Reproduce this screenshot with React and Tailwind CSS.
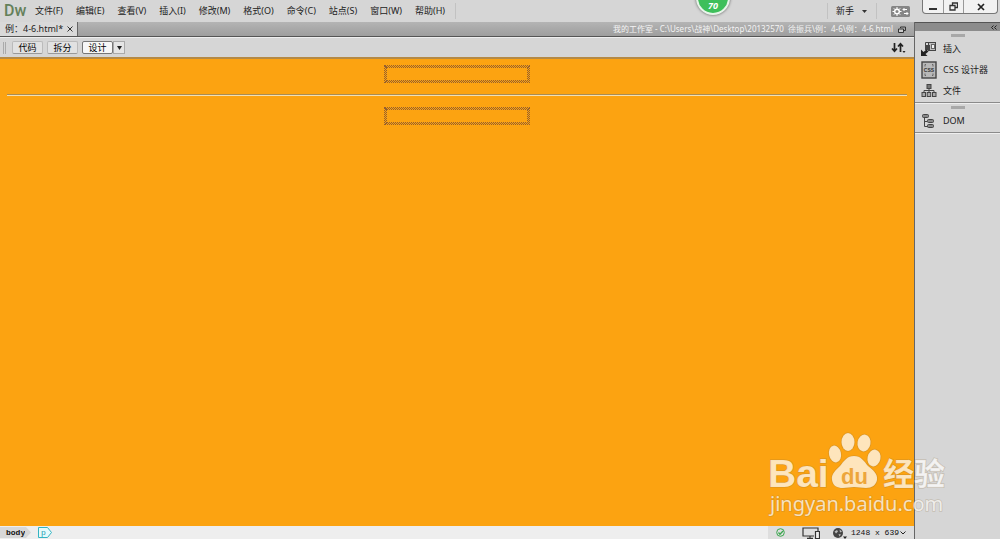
import { useState } from 'react';
import clsx from 'clsx';

const menus = ['文件(F)', '编辑(E)', '查看(V)', '插入(I)', '修改(M)', '格式(O)', '命令(C)', '站点(S)', '窗口(W)', '帮助(H)'];

const views = ['代码', '拆分', '设计'];

function InsertIcon() {
  return (
    <svg viewBox="0 0 16 16" className="w-4 h-4" fill="none" stroke="#444">
      <rect x="7.500" y="1.500" width="7" height="8" fill="#bdbdbd" />
      <rect x="10.500" y="3.500" width="3" height="4" fill="#f2f2f2" stroke="#666" />
      <rect x="4.500" y="4.500" width="4" height="4" fill="#444" />
      <path d="M4.500 4V1.500H8" />
      <path d="M0 8.500V15h6.500l-2-2 3-2.500-2-2-3 2.500z" fill="#222" stroke="none" />
    </svg>
  );
}

function CssIcon() {
  return (
    <svg viewBox="0 0 16 18" className="w-4 h-[18px]">
      <rect x="1" y="1" width="14" height="16" fill="#b8b8b8" stroke="#444" strokeWidth="1.400" />
      <path d="M5 3.500H4v2M11 3.500h1v2M5 14.500H4v-2M11 14.500h1v-2" fill="none" stroke="#666" />
      <text x="8" y="11" textAnchor="middle" fontSize="5" fontWeight="bold" fontFamily="Liberation Sans" fill="#333">CSS</text>
    </svg>
  );
}

function FilesIcon() {
  return (
    <svg viewBox="0 0 16 16" className="w-4 h-4" fill="none" stroke="#444">
      <path d="M8 5v5M3 10V7.500h10V10" />
      <rect x="6" y="1.500" width="4" height="4" fill="#777" />
      <rect x="1" y="9.500" width="3.500" height="4" fill="#aaa" />
      <rect x="6.200" y="9.500" width="3.500" height="4" fill="#aaa" />
      <rect x="11.500" y="9.500" width="3.500" height="4" fill="#aaa" />
    </svg>
  );
}

function DomIcon() {
  return (
    <svg viewBox="0 0 16 16" className="w-4 h-4" fill="none" stroke="#444">
      <path d="M3.500 4v9.500H7M3.500 8.500H6" />
      <rect x="1.500" y="1.500" width="6" height="3" rx="1" fill="#888" />
      <rect x="6.500" y="6.500" width="6" height="3" rx="1" fill="#888" />
      <rect x="6.500" y="11.500" width="6" height="3" rx="1" fill="#888" />
    </svg>
  );
}

function PanelGroup({ children }) {
  return (
    <section className="flex flex-col border-b border-[#8a8a8a] pb-px shadow-[0_1px_0_#eee]">
      <div className="mx-auto mt-[3px] mb-px w-[14px] h-[3px] bg-[#a8a8a8]" />
      {children}
    </section>
  );
}

function PanelButton({ icon, label }) {
  return (
    <button className="flex items-center gap-[6px] h-[21px] px-[6px] whitespace-nowrap text-[9px] text-[#222]">
      {icon}
      {label}
    </button>
  );
}

// Table without content, its outline is three rows of staggered dots
function EmptyTable() {
  return (
    <div className="mx-auto w-[146px] h-[18px] border border-dotted border-[#95602f]">
      <div className="h-full border border-dotted border-[#95602f]">
        <div className="h-full border border-dotted border-[#95602f]" />
      </div>
    </div>
  );
}

function Watermark() {
  return (
    <svg
      viewBox="0 0 190 92"
      className="absolute right-[48px] bottom-[17px] w-[190px] h-[92px] pointer-events-none"
      fill="#fff"
      fillOpacity="0.72"
      stroke="#8c6e40"
      strokeOpacity="0.25"
      strokeWidth="1.500"
      paintOrder="stroke"
    >
      <text x="6" y="57" fontSize="39" fontWeight="bold" fontFamily="Liberation Sans">Bai</text>
      <ellipse cx="73" cy="24" rx="6" ry="8.500" transform="rotate(-12 73 24)" />
      <ellipse cx="86" cy="12" rx="6.500" ry="9" />
      <ellipse cx="102" cy="13" rx="6.500" ry="8.500" transform="rotate(10 102 13)" />
      <ellipse cx="112" cy="28" rx="6.500" ry="8.500" transform="rotate(12 112 28)" />
      <path d="M92 26c-7 0-10 5-14 10-4 4-9 8-8 14 1 6 5 8 11 8 4 0 7-1 11-1s8 1 12 1c6 0 10-3 11-8 1-6-4-10-9-14-4-5-7-10-14-10z" />
      <text x="79" y="54" fontSize="22" fontWeight="bold" fontFamily="Liberation Sans" fill="#eda63b" fillOpacity="1" stroke="none">du</text>
      <text x="121" y="55" fontSize="31" fontWeight="bold" fontFamily="Noto Sans CJK SC">经验</text>
      <text x="8" y="81" fontSize="20" fontFamily="Noto Sans">jingyan.baidu.com</text>
    </svg>
  );
}

export default function App() {
  const [view, setView] = useState('设计');

  return (
    <div className="relative flex flex-col h-screen overflow-hidden bg-[#d6d6d6] text-[#222] font-['Noto_Sans','Noto_Sans_CJK_SC',sans-serif] text-[9px] leading-3">
      {/* Menu bar */}
      <header className="flex items-center h-[22px] shrink-0">
        <div className="w-[30px] pl-1 text-base leading-5 font-medium text-[#64805a] font-['Roboto',sans-serif]">Dw</div>
        <nav className="flex items-center gap-[13px] pl-[5px] whitespace-nowrap">
          {menus.map(m => <button key={m}>{m}</button>)}
        </nav>
        <div className="ml-[10px] w-px h-4 bg-[#c2c2c2]" />
        <div className="flex-1" />
        <div className="w-px h-4 bg-[#c2c2c2]" />
        <button className="flex items-center gap-2 pl-2 pr-[9px]">
          新手
          <svg viewBox="0 0 5 3" className="w-[5px] h-[3px] mt-px"><path d="M0 0h5L2.500 3z" fill="#333" /></svg>
        </button>
        <div className="w-px h-4 mr-[14px] bg-[#c2c2c2]" />
        <button aria-label="同步设置" className="mr-3">
          <svg viewBox="0 0 19 11" className="w-[19px] h-[11px]">
            <rect width="19" height="11" rx="1.500" fill="#858585" />
            <circle cx="6" cy="5.500" r="2.300" fill="none" stroke="#fff" strokeWidth="1.400" />
            <path d="M6 1v2M6 8v2M1.500 5.500h2M8.500 5.500h2M2.800 2.300l1.400 1.400M7.800 7.300l1.400 1.400M2.800 8.700l1.400-1.400M7.800 3.700l1.400-1.400" stroke="#fff" />
            <path d="M16 3.500h-4M13.500 2L12 3.500 13.500 5M13 7.500h4M15.500 6L17 7.500 15.500 9" fill="none" stroke="#fff" />
          </svg>
        </button>
        <div className="flex self-start h-[14px] mr-[2px] border border-t-0 border-[#777] rounded-b-sm bg-[#f2f2f2] divide-x divide-[#999]">
          <button aria-label="最小化" className="w-[21px] flex justify-center items-center">
            <svg viewBox="0 0 8 8" className="w-2 h-2"><path d="M0 5h8v2H0z" fill="#333" /></svg>
          </button>
          <button aria-label="还原" className="w-[20px] flex justify-center items-center">
            <svg viewBox="0 0 9 9" className="w-[9px] h-[9px]" fill="#f2f2f2" stroke="#333" strokeWidth="1.300">
              <path d="M3.500 1h5v4.500h-5z" /><path d="M1 3.500h5V8H1z" />
            </svg>
          </button>
          <button aria-label="关闭" className="w-[33px] flex justify-center items-center">
            <svg viewBox="0 0 8 8" className="w-2 h-2"><path d="M1 1l6 6M7 1L1 7" stroke="#222" strokeWidth="1.700" /></svg>
          </button>
        </div>
      </header>

      <div className="flex flex-1 min-h-0">
        <main className="flex flex-col flex-1 min-w-0">
          {/* Document tabs */}
          <div className="flex items-center h-[15px] shrink-0 border-b border-[#555] bg-linear-to-b from-[#b4b4b4] to-[#9e9e9e]">
            <div className="flex items-center gap-1 h-full pl-[5px] pr-1 bg-[#d9d9d9] border-r border-[#666] whitespace-nowrap">
              <span>例：4-6.html*</span>
              <button aria-label="关闭文件">
                <svg viewBox="0 0 6 6" className="w-[6px] h-[6px]"><path d="M.5.5l5 5M5.500.5l-5 5" stroke="#333" /></svg>
              </button>
            </div>
            <span className="ml-auto text-[#f4f4f4] text-[8px] whitespace-pre">我的工作室 - C:\Users\战神\Desktop\20132570  徐振兵\例：4-6\例：4-6.html</span>
            <button aria-label="还原文档" className="ml-[5px] mr-2">
              <svg viewBox="0 0 8 7" className="w-2 h-[7px]" fill="none" stroke="#333">
                <path d="M2.500 2V1h5v3.500H6" /><path d="M.5 3h5v3.500h-5z" fill="#ccc" />
              </svg>
            </button>
          </div>

          {/* View toolbar */}
          <div className="flex items-center h-[22px] shrink-0 pl-[3px] border-t border-t-[#eee] border-b-2 border-b-[#b58a45]">
            <div className="w-[3px] h-3 mr-[6px] border-x border-[#aaa]" />
            <div className="flex gap-1">
              {views.map(v => (
                <button
                  key={v}
                  onClick={() => setView(v)}
                  className={clsx(
                    'w-[31px] h-[13px] border rounded-xs text-black leading-[11px]',
                    v === view ? 'bg-[#f7f7f7] border-[#777]' : 'bg-[#e2e2e2] border-[#bbb] border-b-[#999]'
                  )}
                >
                  {v}
                </button>
              ))}
            </div>
            <button aria-label="实时视图" className="flex justify-center items-center w-3 h-[13px] border border-[#aaa] bg-[#e5e5e5]">
              <svg viewBox="0 0 5 4" className="w-[5px] h-1"><path d="M0 0h5L2.500 4z" fill="#222" /></svg>
            </button>
            <button aria-label="文件管理" className="ml-auto mr-2">
              <svg viewBox="0 0 15 11" className="w-[15px] h-[11px]" fill="none" stroke="#222" strokeWidth="1.700">
                <path d="M3.500 1v8M1 6.500L3.500 9.200 6 6.500" /><path d="M9.500 10V2M7 4.500L9.500 1.800 12 4.500" />
                <path d="M11.500 9h3L13 11z" fill="#222" stroke="none" />
              </svg>
            </button>
          </div>

          {/* Design view */}
          <div className="flex-1 px-[7px] pt-[6px] bg-[#fca311]">
            <EmptyTable />
            <hr className="mt-[11px] mb-[11px] border-t border-t-[#a98d55] border-b border-b-[#f3dfb4]" />
            <EmptyTable />
          </div>

          {/* Status bar */}
          <footer className="flex items-center h-[13px] shrink-0 bg-[#eee] font-['Liberation_Mono',monospace] text-[8px] text-[#111]">
            <button className="flex items-center h-[11px] pl-[6px] bg-[#d8d8d8] font-bold">
              body
              <svg viewBox="0 0 6 11" className="w-[6px] h-[11px]"><path d="M0 0h1l5 5.500L1 11H0z" fill="#d8d8d8" /><path d="M1 0h5v11H1l5-5.500z" fill="#eee" /></svg>
            </button>
            <button aria-label="p" className="ml-[7px]">
              <svg viewBox="0 0 14 11" className="w-[14px] h-[11px]">
                <path d="M.5.5h9l4 5-4 5h-9z" fill="#e6fafc" stroke="#35b4c2" />
                <text x="3" y="8" fontSize="8" fontFamily="Liberation Mono" fill="#22a0b0">p</text>
              </svg>
            </button>
            <div className="flex items-center self-stretch ml-auto pl-2 pr-2 bg-[#dedede]">
              <svg viewBox="0 0 9 9" className="w-[9px] h-[9px] mr-[17px]" fill="none" stroke="#3aa64e">
                <circle cx="4.500" cy="4.500" r="3.800" /><path d="M2.500 4.500L4 6.200l3-3.200" strokeWidth="1.300" />
              </svg>
              <svg viewBox="0 0 18 12" className="w-[18px] h-3 mr-3" fill="none" stroke="#333" strokeWidth="1.200">
                <path d="M12 9H1V1h15v3M5 11.300h6M8 9v2" /><path d="M13.500 4.500h4v7h-4z" fill="#eee" />
              </svg>
              <svg viewBox="0 0 15 12" className="w-[15px] h-3 mr-1">
                <circle cx="6" cy="6" r="5" fill="#444" />
                <path d="M2.500 4.500L5 3l1 1.500-2 2zM7.500 2.500l2.500 2-2 1zM6.500 7l2.500.5-1.500 2z" fill="#bbb" />
                <path d="M11 9.500h4L13 12z" fill="#222" />
              </svg>
              <button className="flex items-center gap-px whitespace-nowrap">
                1248 x 639
                <svg viewBox="0 0 6 4" className="w-[6px] h-1"><path d="M.5.5L3 3 5.500.5" fill="none" stroke="#222" /></svg>
              </button>
            </div>
          </footer>
        </main>

        {/* Panels */}
        <aside className="w-[86px] shrink-0 border-l border-[#666] bg-[#d6d6d6]">
          <div className="flex justify-end items-center h-[9px] pr-[3px] border-t border-[#555] bg-[#8c8c8c]">
            <button aria-label="展开面板" className="flex">
              <svg viewBox="0 0 6 5" className="w-[6px] h-[5px]" fill="none" stroke="#222"><path d="M2.500.5l-2 2 2 2M5.500.5l-2 2 2 2" /></svg>
            </button>
          </div>
          <PanelGroup>
            <PanelButton icon={<InsertIcon />} label="插入" />
            <PanelButton icon={<CssIcon />} label="CSS 设计器" />
            <PanelButton icon={<FilesIcon />} label="文件" />
          </PanelGroup>
          <PanelGroup>
            <PanelButton icon={<DomIcon />} label="DOM" />
          </PanelGroup>
        </aside>
      </div>

      {/* Floating memory gauge */}
      <div className="absolute left-[696px] -top-[19px] flex justify-center items-end w-[34px] h-[34px] pb-[2px] rounded-full border-2 border-[#e8f5ea] bg-[#3ebf5b] shadow-[0_0_3px_#555] text-white font-bold italic leading-[10px]">
        70
      </div>

      <Watermark />
    </div>
  );
}
